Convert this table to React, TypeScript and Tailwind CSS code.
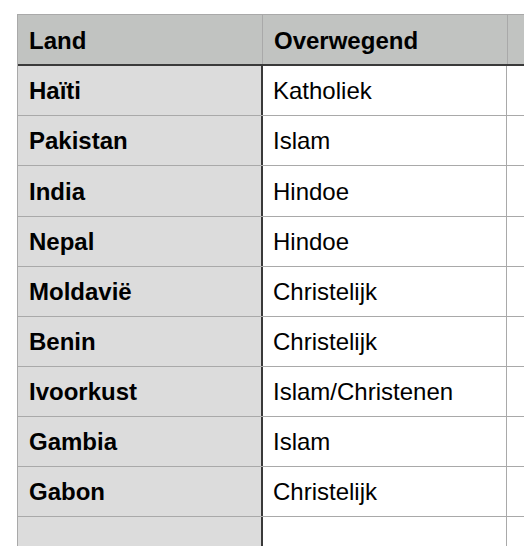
import React from "react";

const rows: [string, string][] = [
  ["Haïti", "Katholiek"],
  ["Pakistan", "Islam"],
  ["India", "Hindoe"],
  ["Nepal", "Hindoe"],
  ["Moldavië", "Christelijk"],
  ["Benin", "Christelijk"],
  ["Ivoorkust", "Islam/Christenen"],
  ["Gambia", "Islam"],
  ["Gabon", "Christelijk"],
  ["", ""],
];

export default function App() {
  return (
    <div
      className="w-[524px] h-[546px] overflow-hidden bg-white pt-[14px] pl-[17px]"
      style={{ fontFamily: '"Liberation Sans", Arial, sans-serif' }}
    >
      <div className="w-[800px] border-t border-l border-[#a9a9a9]">
        <div className="flex h-[51px] bg-[#c1c3c1] border-b-2 border-[#3a3a3a]">
          <div className="w-[245px] shrink-0 flex items-center pt-[2px] pl-[11px] text-[24px] font-bold text-black border-r border-[#a9a9a9]">
            Land
          </div>
          <div className="w-[245px] shrink-0 flex items-center pt-[2px] pl-[11px] text-[24px] font-bold text-black border-r border-[#a9a9a9]">
            Overwegend
          </div>
          <div className="w-[245px] shrink-0" />
        </div>
        {rows.map(([a, b], i) => (
          <div
            key={i}
            className={`flex ${i === 2 ? "h-[51px]" : "h-[50px]"} border-b border-[#a9a9a9]`}
          >
            <div className="w-[245px] shrink-0 flex items-center pt-[1px] pl-[11px] bg-[#dcdcdc] text-[24px] font-bold text-black border-r-2 border-[#3a3a3a]">
              {a}
            </div>
            <div className="w-[244px] shrink-0 flex items-center pt-[1px] pl-[10px] bg-white text-[24px] text-black border-r border-[#a9a9a9]">
              {b}
            </div>
            <div className="w-[245px] shrink-0 bg-white" />
          </div>
        ))}
      </div>
    </div>
  );
}
